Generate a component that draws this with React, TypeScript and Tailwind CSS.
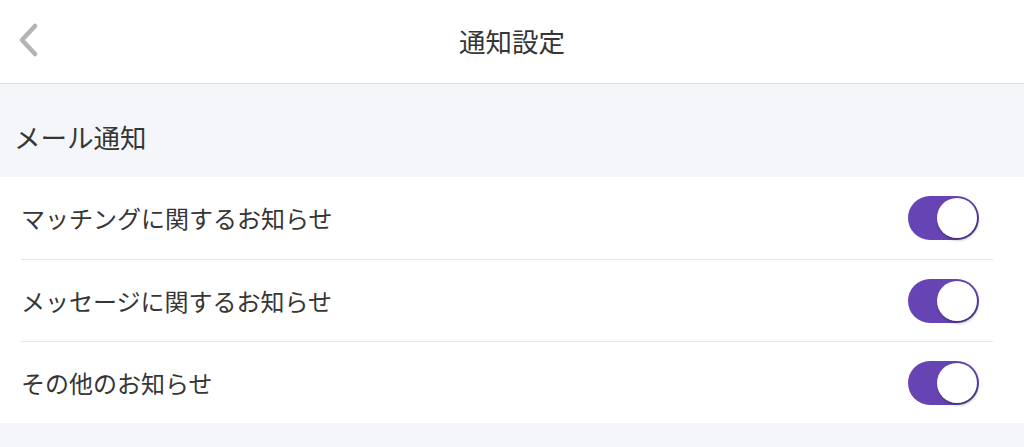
import { useState } from "react";

// Notification settings screen: header, section title, and a list of toggles.

const FONT = { fontFamily: '"Noto Sans CJK JP", "Noto Sans", sans-serif' };

type Item = { id: string; label: string };

const ITEMS: Item[] = [
  { id: "matching", label: "マッチングに関するお知らせ" },
  { id: "message", label: "メッセージに関するお知らせ" },
  { id: "other", label: "その他のお知らせ" },
];

function Toggle({ on, onChange }: { on: boolean; onChange: () => void }) {
  return (
    <button
      onClick={onChange}
      className={`relative w-[71px] h-[44px] mr-[14px] rounded-full transition-colors ${
        on ? "bg-[#6744b4]" : "bg-[#e5e5ea]"
      }`}
    >
      <span
        className={`absolute top-[2px] w-[40px] h-[40px] rounded-full bg-white shadow-[1px_2px_3px_rgba(0,0,0,0.35)] transition-all ${
          on ? "left-[29px]" : "left-[2px]"
        }`}
      />
    </button>
  );
}

export default function App() {
  const [state, setState] = useState<Record<string, boolean>>({
    matching: true,
    message: true,
    other: true,
  });

  return (
    <div className="w-[1024px] h-[447px] bg-[#f5f6fa] overflow-hidden text-[#363636]" style={FONT}>
      {/* Header */}
      <header className="relative h-[84px] bg-white border-b border-[#e2e2e2] flex items-center justify-center">
        <button className="absolute left-[14px] top-[22px] w-[28px] h-[36px] flex items-center justify-center">
          <svg width="22" height="34" viewBox="0 0 22 34" fill="none">
            <path
              d="M18 3 L5 17 L18 31"
              stroke="#b3b3b3"
              strokeWidth="4.5"
              strokeLinecap="round"
              strokeLinejoin="round"
            />
          </svg>
        </button>
        <h1 className="text-[26.5px] leading-none">通知設定</h1>
      </header>

      {/* Section title */}
      <div className="h-[93px] flex items-center px-[14px]">
        <h2 className="text-[26.5px] leading-none pt-[14px]">メール通知</h2>
      </div>

      {/* Toggle list */}
      <ul className="bg-white pl-[21px] pr-[31px]">
        {ITEMS.map((item, i) => (
          <li
            key={item.id}
            className={`h-[82px] flex items-center justify-between ${
              i > 0 ? "border-t border-[#e6e6e6]" : ""
            }`}
          >
            <span className="text-[24px] leading-none">{item.label}</span>
            <Toggle
              on={state[item.id]}
              onChange={() => setState((s) => ({ ...s, [item.id]: !s[item.id] }))}
            />
          </li>
        ))}
      </ul>
    </div>
  );
}
